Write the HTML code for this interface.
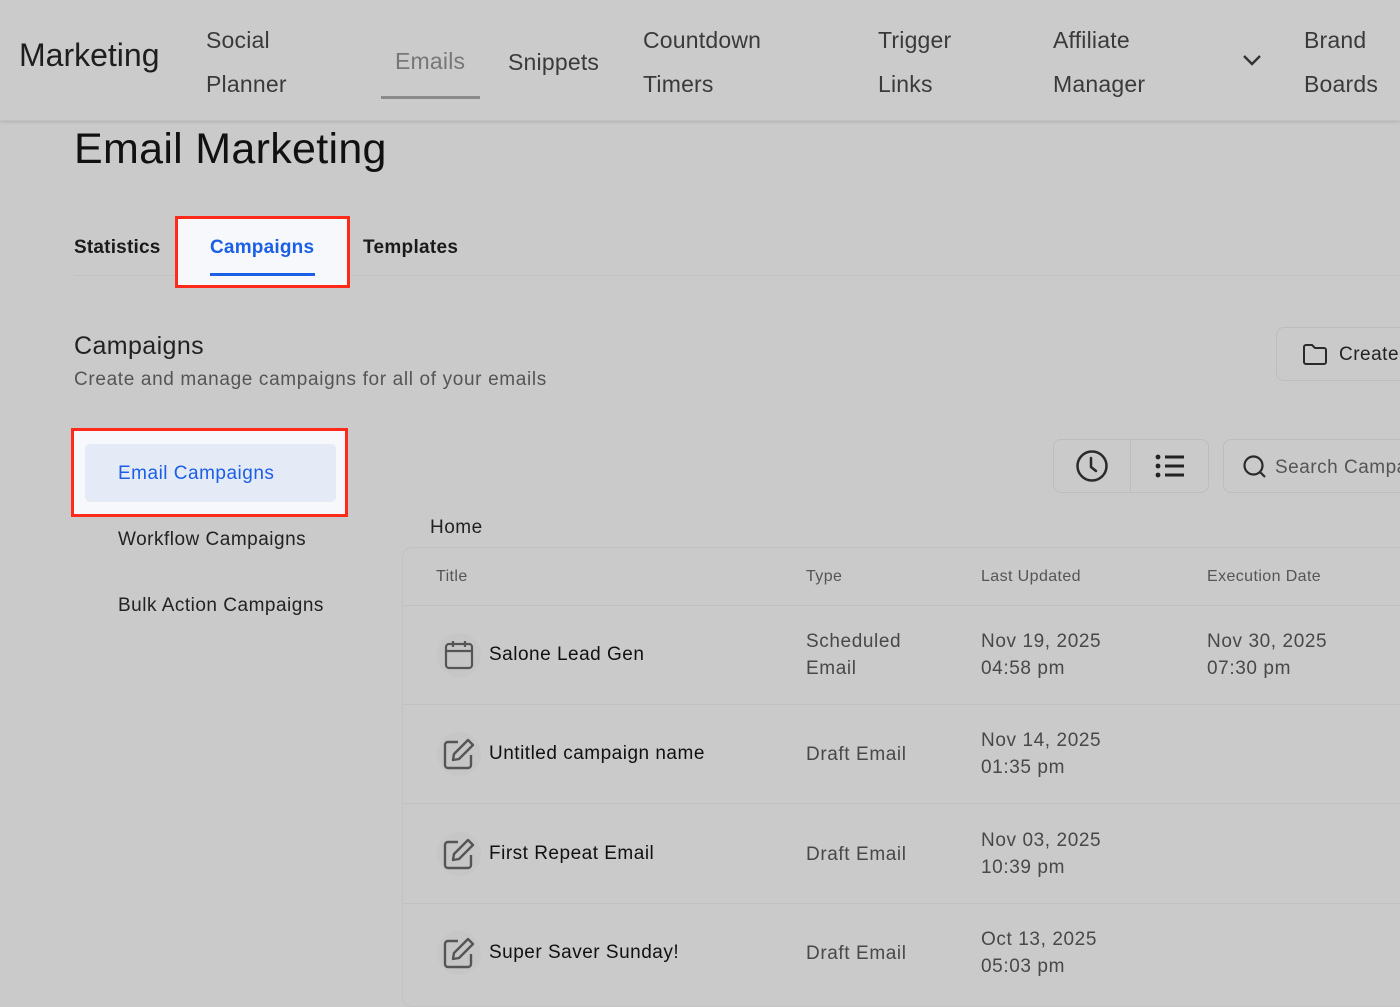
<!DOCTYPE html>
<html><head><style>
*{margin:0;padding:0;box-sizing:border-box}
body{width:1400px;height:996px;overflow:hidden;background:#cacaca;font-family:"Liberation Sans",sans-serif;position:relative;color:#1a1a1a}
.a{position:absolute;white-space:nowrap}
.nav{font-size:23px;color:#3a3a3a;line-height:44px;letter-spacing:0.2px}
.hdr{position:absolute;left:0;top:0;width:1400px;height:121px;background:#cbcbcb;box-shadow:0 1px 3px rgba(0,0,0,.12);border-bottom:1px solid #c2c2c2}
.th{font-size:16px;color:#555;letter-spacing:0.4px}
.cell{font-size:19px;color:#484848;line-height:27px;letter-spacing:0.6px}
.name{font-size:19px;color:#111;letter-spacing:0.5px}
.line{position:absolute;left:403px;width:997px;height:1px;background:#c2c2c2}
.ic{position:absolute;left:437px;width:44px;height:44px;border-radius:50%;background:#c6c6c6}
.t{letter-spacing:0.5px}
</style></head><body>
<div class="hdr"></div>
<div class="a" style="left:19px;top:37px;font-size:32px;color:#1e1e1e">Marketing</div>
<div class="a nav" style="left:206px;top:18px">Social<br>Planner</div>
<div class="a nav" style="left:395px;top:39px;color:#777">Emails</div>
<div class="a" style="left:381px;top:96px;width:99px;height:3px;background:#8a8a8a"></div>
<div class="a nav" style="left:508px;top:40px">Snippets</div>
<div class="a nav" style="left:643px;top:18px">Countdown<br>Timers</div>
<div class="a nav" style="left:878px;top:18px">Trigger<br>Links</div>
<div class="a nav" style="left:1053px;top:18px">Affiliate<br>Manager</div>
<svg class="a" style="left:1241px;top:52px" width="22" height="16" viewBox="0 0 22 16"><path d="M3 4l8 8 8-8" fill="none" stroke="#333" stroke-width="2.4"/></svg>
<div class="a nav" style="left:1304px;top:18px">Brand<br>Boards</div>

<div class="a" style="left:74px;top:125px;font-size:43px;color:#111;letter-spacing:0.3px">Email Marketing</div>
<div class="a" style="left:74px;top:275px;width:1326px;height:1px;background:#c3c3c3"></div>
<div class="a t" style="left:74px;top:237px;font-size:19px;font-weight:bold;color:#1a1a1a;letter-spacing:0.2px">Statistics</div>
<div class="a" style="left:175px;top:216px;width:175px;height:72px;border:3px solid #ff2a1a;background:#f7f8fb"></div>
<div class="a" style="left:210px;top:237px;font-size:19px;font-weight:bold;color:#1b5fe6;letter-spacing:0.2px">Campaigns</div>
<div class="a" style="left:210px;top:273px;width:105px;height:3px;background:#1b5fe6"></div>
<div class="a" style="left:363px;top:237px;font-size:19px;font-weight:bold;color:#1a1a1a;letter-spacing:0.3px">Templates</div>

<div class="a" style="left:74px;top:332px;font-size:25px;color:#222;letter-spacing:0.4px">Campaigns</div>
<div class="a" style="left:74px;top:369px;font-size:19px;color:#555;letter-spacing:0.65px">Create and manage campaigns for all of your emails</div>
<div class="a" style="left:1276px;top:327px;width:140px;height:54px;border:1px solid #bdbdbd;border-radius:8px"></div>
<svg class="a" style="left:1301px;top:341px" width="28" height="26" viewBox="0 0 28 26"><path d="M3 6a2 2 0 0 1 2-2h6l3 3h9a2 2 0 0 1 2 2v12a2 2 0 0 1-2 2H5a2 2 0 0 1-2-2z" fill="none" stroke="#2a2a2a" stroke-width="2"/></svg>
<div class="a t" style="left:1339px;top:344px;font-size:19px;color:#222">Create</div>

<div class="a" style="left:71px;top:428px;width:277px;height:89px;border:3px solid #ff2a1a;background:#f7f8fb"></div>
<div class="a" style="left:85px;top:444px;width:251px;height:58px;border-radius:5px;background:#e5eaf7"></div>
<div class="a t" style="left:118px;top:463px;font-size:19px;color:#1b5fe6">Email Campaigns</div>
<div class="a t" style="left:118px;top:529px;font-size:19px;color:#222">Workflow Campaigns</div>
<div class="a t" style="left:118px;top:595px;font-size:19px;color:#222">Bulk Action Campaigns</div>

<div class="a" style="left:1053px;top:439px;width:156px;height:54px;border:1px solid #bdbdbd;border-radius:8px"></div>
<div class="a" style="left:1130px;top:440px;width:1px;height:52px;background:#bdbdbd"></div>
<svg class="a" style="left:1074px;top:448px" width="36" height="36" viewBox="0 0 36 36"><circle cx="18" cy="18" r="14.5" fill="none" stroke="#2a2a2a" stroke-width="2.5"/><path d="M17 10v9l5 4" fill="none" stroke="#2a2a2a" stroke-width="2.5" stroke-linecap="round"/></svg>
<svg class="a" style="left:1154px;top:453px" width="32" height="26" viewBox="0 0 32 26"><circle cx="4" cy="4" r="2.4" fill="#222"/><circle cx="4" cy="13" r="2.4" fill="#222"/><circle cx="4" cy="22" r="2.4" fill="#222"/><path d="M11 4h19M11 13h19M11 22h19" stroke="#222" stroke-width="3"/></svg>
<div class="a" style="left:1223px;top:439px;width:200px;height:54px;border:1px solid #bdbdbd;border-radius:8px"></div>
<svg class="a" style="left:1242px;top:454px" width="26" height="26" viewBox="0 0 26 26"><circle cx="11.5" cy="11.5" r="9" fill="none" stroke="#2a2a2a" stroke-width="2.2"/><path d="M18 18l5 5" stroke="#2a2a2a" stroke-width="2.2"/></svg>
<div class="a t" style="left:1275px;top:457px;font-size:19px;color:#555">Search Campaigns</div>

<div class="a t" style="left:430px;top:517px;font-size:19px;color:#222">Home</div>
<div class="a" style="left:402px;top:547px;width:1010px;height:460px;border:1px solid #c2c2c2;border-radius:10px"></div>
<div class="a th" style="left:436px;top:568px">Title</div>
<div class="a th" style="left:806px;top:568px">Type</div>
<div class="a th" style="left:981px;top:568px">Last Updated</div>
<div class="a th" style="left:1207px;top:568px">Execution Date</div>
<div class="line" style="top:605px"></div>
<div class="line" style="top:704px"></div>
<div class="line" style="top:803px"></div>
<div class="line" style="top:903px"></div>

<div class="ic" style="top:633px"></div>
<svg class="a" style="left:444px;top:639px" width="30" height="32" viewBox="0 0 30 32"><rect x="2" y="5" width="26" height="24" rx="3" fill="none" stroke="#555" stroke-width="2.2"/><path d="M2 12h26M9 2v6M21 2v6" stroke="#555" stroke-width="2.2"/></svg>
<div class="a name" style="left:489px;top:644px">Salone Lead Gen</div>
<div class="a cell" style="left:806px;top:628px">Scheduled<br>Email</div>
<div class="a cell" style="left:981px;top:628px">Nov 19, 2025<br>04:58 pm</div>
<div class="a cell" style="left:1207px;top:628px">Nov 30, 2025<br>07:30 pm</div>

<div class="ic" style="top:732px"></div>
<svg class="a" style="left:442px;top:737px" width="34" height="34" viewBox="0 0 34 34"><path d="M16 5H6a3 3 0 0 0-3 3v20a3 3 0 0 0 3 3h20a3 3 0 0 0 3-3V18" fill="none" stroke="#555" stroke-width="2.4"/><path d="M26 3l5 5-14 14-6 1 1-6z" fill="none" stroke="#555" stroke-width="2.4" stroke-linejoin="round"/></svg>
<div class="a name" style="left:489px;top:743px">Untitled campaign name</div>
<div class="a cell" style="left:806px;top:741px">Draft Email</div>
<div class="a cell" style="left:981px;top:727px">Nov 14, 2025<br>01:35 pm</div>

<div class="ic" style="top:832px"></div>
<svg class="a" style="left:442px;top:837px" width="34" height="34" viewBox="0 0 34 34"><path d="M16 5H6a3 3 0 0 0-3 3v20a3 3 0 0 0 3 3h20a3 3 0 0 0 3-3V18" fill="none" stroke="#555" stroke-width="2.4"/><path d="M26 3l5 5-14 14-6 1 1-6z" fill="none" stroke="#555" stroke-width="2.4" stroke-linejoin="round"/></svg>
<div class="a name" style="left:489px;top:843px">First Repeat Email</div>
<div class="a cell" style="left:806px;top:841px">Draft Email</div>
<div class="a cell" style="left:981px;top:827px">Nov 03, 2025<br>10:39 pm</div>

<div class="ic" style="top:931px"></div>
<svg class="a" style="left:442px;top:936px" width="34" height="34" viewBox="0 0 34 34"><path d="M16 5H6a3 3 0 0 0-3 3v20a3 3 0 0 0 3 3h20a3 3 0 0 0 3-3V18" fill="none" stroke="#555" stroke-width="2.4"/><path d="M26 3l5 5-14 14-6 1 1-6z" fill="none" stroke="#555" stroke-width="2.4" stroke-linejoin="round"/></svg>
<div class="a name" style="left:489px;top:942px">Super Saver Sunday!</div>
<div class="a cell" style="left:806px;top:940px">Draft Email</div>
<div class="a cell" style="left:981px;top:926px">Oct 13, 2025<br>05:03 pm</div>
</body></html>
